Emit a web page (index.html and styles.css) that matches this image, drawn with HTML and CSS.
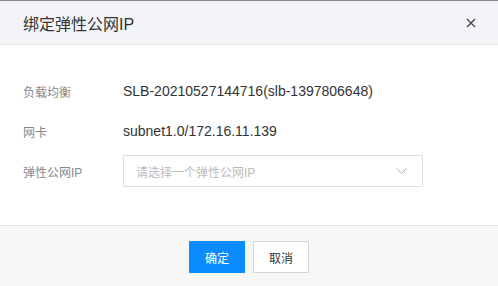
FILE: index.html
```html
<!DOCTYPE html>
<html lang="zh-CN">
<head>
    <meta charset="UTF-8">
    <meta name="viewport" content="width=device-width, initial-scale=1.0">
    <title>绑定弹性公网IP</title>
    <link rel="stylesheet" href="styles.css">
</head>
<body>
    <div class="dialog">
        <div class="dialog-header">
            <h3 class="dialog-title">绑定弹性公网IP</h3>
            <button class="dialog-close" title="关闭">
                <svg width="10" height="10" viewBox="0 0 10 10">
                    <path d="M1 1 L9 9 M9 1 L1 9" stroke="#444" stroke-width="1.3" fill="none"/>
                </svg>
            </button>
        </div>

        <div class="dialog-body">
            <div class="form-row">
                <label class="form-label">负载均衡</label>
                <div class="form-value">SLB-20210527144716(slb-1397806648)</div>
            </div>
            <div class="form-row">
                <label class="form-label">网卡</label>
                <div class="form-value">subnet1.0/172.16.11.139</div>
            </div>
            <div class="form-row">
                <label class="form-label">弹性公网IP</label>
                <div class="select">
                    <span class="select-placeholder">请选择一个弹性公网IP</span>
                    <svg class="select-arrow" width="11" height="6" viewBox="0 0 11 6">
                        <path d="M0.5 0.5 L5.5 5.5 L10.5 0.5" stroke="#aaa" stroke-width="1" fill="none"/>
                    </svg>
                </div>
            </div>
        </div>

        <div class="dialog-footer">
            <button class="btn btn-primary">确定</button>
            <button class="btn">取消</button>
        </div>
    </div>
</body>
</html>
```

FILE: styles.css
```css
body {
    margin: 0;
    padding: 0;
    background-color: #fff;
    font-family: "Liberation Sans", "Noto Sans CJK SC", sans-serif;
    color: #333;
}
.dialog {
    border-top: 1px solid #8a8a8a;
}
.dialog-header {
    display: flex;
    align-items: center;
    justify-content: space-between;
    height: 43px;
    padding: 0 22px 0 23px;
    background-color: #f3f4f8;
    border-bottom: 1px solid #e3e3e3;
}
.dialog-title {
    margin: 0;
    font-size: 16px;
    font-weight: normal;
    color: #333;
}
.dialog-close {
    display: flex;
    padding: 0;
    border: none;
    background: none;
    cursor: pointer;
}
.dialog-body {
    padding: 30px 23px 38px;
}
.form-row {
    display: flex;
    align-items: center;
    min-height: 32px;
    margin-bottom: 8px;
}
.form-row:last-child {
    margin-bottom: 0;
}
.form-label {
    width: 100px;
    font-size: 12px;
    color: #888;
}
.form-value {
    font-size: 14px;
    color: #333;
}
.select {
    display: flex;
    align-items: center;
    justify-content: space-between;
    box-sizing: border-box;
    width: 300px;
    height: 32px;
    padding: 0 15px 0 12px;
    border: 1px solid #ddd;
    background-color: #fff;
}
.select-placeholder {
    font-size: 12px;
    color: #bbb;
}
.dialog-footer {
    display: flex;
    justify-content: center;
    gap: 8px;
    height: 45px;
    padding-top: 15px;
    background-color: #f7f7f7;
    border-top: 1px solid #e3e3e3;
}
.btn {
    box-sizing: border-box;
    width: 56px;
    height: 32px;
    font-family: inherit;
    font-size: 12px;
    color: #333;
    background-color: #fff;
    border: 1px solid #d5d5d5;
    cursor: pointer;
}
.btn-primary {
    color: #fff;
    background-color: #0a8cff;
    border-color: #0a8cff;
}
```
